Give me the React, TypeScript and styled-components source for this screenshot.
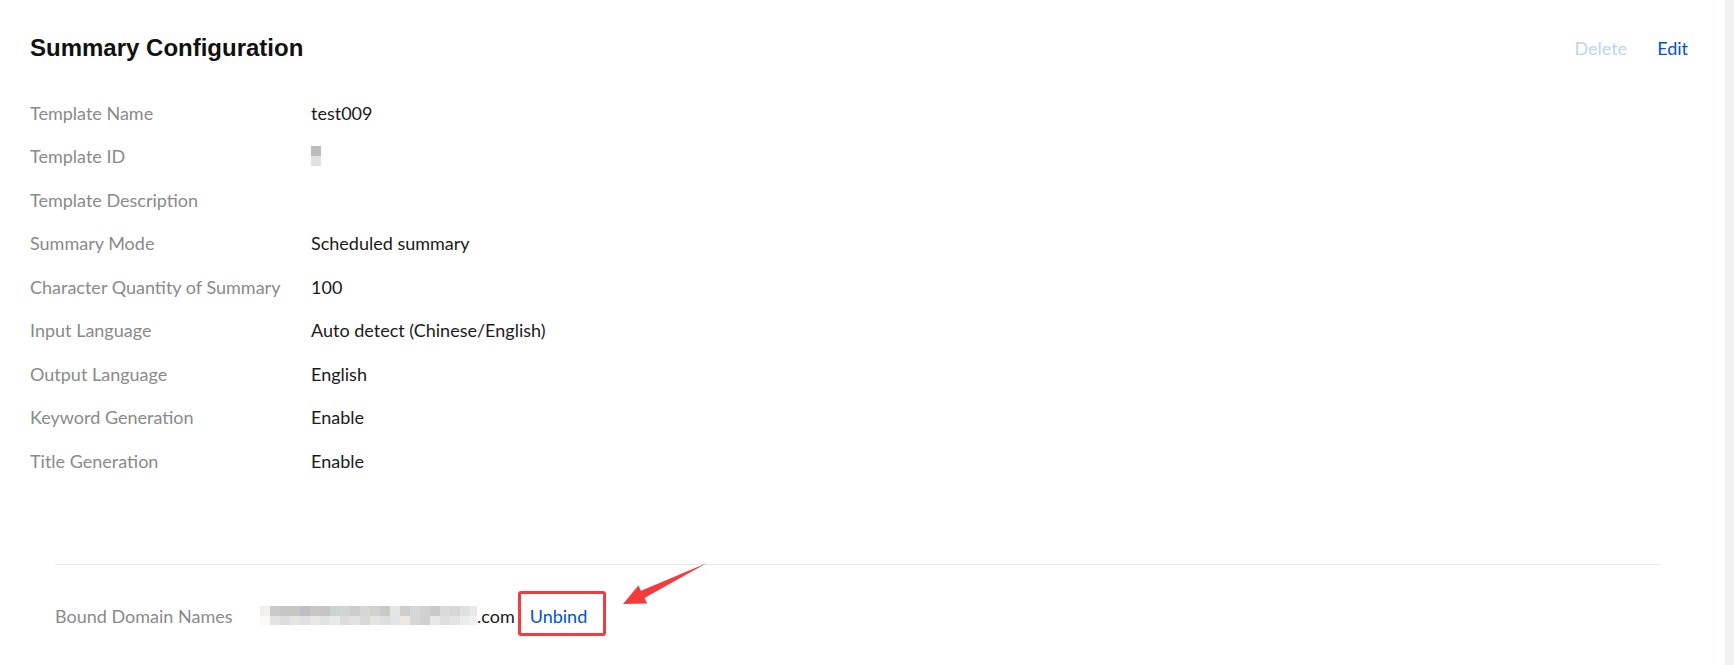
import React from "react";
import styled, { createGlobalStyle } from "styled-components";

const GlobalStyle = createGlobalStyle`
  html, body {
    margin: 0;
    padding: 0;
    background: #f0f2f5;
  }
  body {
    font-family: Lato, "Noto Sans", sans-serif;
  }
`;

interface Field {
  label: string;
  value?: string;
  masked?: boolean;
}

const fields: Field[] = [
  { label: "Template Name", value: "test009" },
  { label: "Template ID", masked: true },
  { label: "Template Description" },
  { label: "Summary Mode", value: "Scheduled summary" },
  { label: "Character Quantity of Summary", value: "100" },
  { label: "Input Language", value: "Auto detect (Chinese/English)" },
  { label: "Output Language", value: "English" },
  { label: "Keyword Generation", value: "Enable" },
  { label: "Title Generation", value: "Enable" },
];

const topMosaic = [
  "#f1efea", "#cacacd", "#c6c6c6", "#c8c5c2", "#bebec4", "#c9c7c5", "#c5c5c5", "#cdd3d1",
  "#d3d3d3", "#cccccc", "#d6d6d6", "#d1d1cf", "#c9c9c5", "#e5e5e9", "#cdcdcd", "#d7d7d9",
  "#d1d1d1", "#c9c9c9", "#dadada", "#d6d6d6", "#e0e0e0", "#e9e9e9",
];
const bottomMosaic = [
  "#fbfaf6", "#e3e3e3", "#dddddd", "#e4e4e4", "#dfdfe1", "#e6e6e6", "#e2e2e2", "#e8e8e6",
  "#dcdcdc", "#e1e1e1", "#d9d9d9", "#e5e5e5", "#dedee0", "#e2e4e6", "#ece9e4", "#d6d6d6",
  "#cfcfcf", "#e6e6e6", "#dedede", "#e4e4e4", "#ececec", "#f1f1f1",
];

export default function App() {
  return (
    <>
      <GlobalStyle />
      <Card>
        <Header>
          <Title>Summary Configuration</Title>
          <Actions>
            <LinkButton disabled>Delete</LinkButton>
            <LinkButton>Edit</LinkButton>
          </Actions>
        </Header>
        <FieldList>
          {fields.map((f) => (
            <FieldRow key={f.label}>
              <Label>{f.label}</Label>
              <Value>
                {f.masked ? (
                  <IdMask>
                    <svg width="10" height="20" viewBox="0 0 10 20">
                      <rect x="0" y="0" width="10" height="10" fill="#bcbcbc" />
                      <rect x="0" y="10" width="10" height="10" fill="#e1e1e1" />
                    </svg>
                  </IdMask>
                ) : (
                  f.value
                )}
              </Value>
            </FieldRow>
          ))}
        </FieldList>
        <BoundSection>
          <BoundRow>
            <BoundLabel>Bound Domain Names</BoundLabel>
            <Domain>
              <svg width="217" height="19" viewBox="0 0 217 19">
                {topMosaic.map((c, i) => (
                  <rect key={"t" + i} x={i * 10} y="0" width="10" height="10" fill={c} />
                ))}
                {bottomMosaic.map((c, i) => (
                  <rect key={"b" + i} x={i * 10} y="10" width="10" height="9" fill={c} />
                ))}
              </svg>
              <DomainSuffix>.com</DomainSuffix>
            </Domain>
            <UnbindWrap>
              <LinkButton>Unbind</LinkButton>
              <Highlight />
              <Arrow width="100" height="60" viewBox="0 0 100 60">
                <polygon
                  points="7,49 22.4,30.4 25,35.8 91,8 28.5,43 31.2,48.4"
                  fill="#f43c3d"
                />
              </Arrow>
            </UnbindWrap>
          </BoundRow>
        </BoundSection>
      </Card>
    </>
  );
}

const Card = styled.div`
  box-sizing: border-box;
  width: 1725px;
  height: 665px;
  background: #fff;
  padding: 24px 37px 0 30px;
`;

const Header = styled.div`
  display: flex;
  align-items: center;
  justify-content: space-between;
  height: 48px;
`;

const Title = styled.h2`
  margin: 0;
  font-family: "Liberation Sans", Arial, sans-serif;
  font-size: 24px;
  font-weight: 700;
  color: #111;
`;

const Actions = styled.div`
  display: flex;
  align-items: center;
  gap: 30px;
`;

const LinkButton = styled.span<{ disabled?: boolean }>`
  font-family: Lato, "Noto Sans", sans-serif;
  font-size: 18px;
  line-height: 24px;
  color: ${(p) => (p.disabled ? "#bbd3fb" : "#0052d9")};
  cursor: ${(p) => (p.disabled ? "not-allowed" : "pointer")};
`;

const FieldList = styled.div`
  margin-top: 19px;
  display: flex;
  flex-direction: column;
`;

const FieldRow = styled.div`
  display: flex;
  align-items: center;
  height: 43.5px;
  font-size: 18px;
  line-height: 24px;
`;

const Label = styled.div`
  width: 281px;
  flex-shrink: 0;
  color: #8a8a8a;
`;

const Value = styled.div`
  color: #1a1a1a;
`;

const IdMask = styled.div`
  display: flex;
  align-items: center;
  height: 24px;
`;

const BoundSection = styled.div`
  margin: 81px 27px 0 25px;
  border-top: 1px solid #e7e7ee;
`;

const BoundRow = styled.div`
  display: flex;
  align-items: center;
  padding-top: 39px;
  font-size: 18px;
  line-height: 24px;
`;

const BoundLabel = styled.div`
  width: 205px;
  flex-shrink: 0;
  color: #8a8a8a;
`;

const Domain = styled.div`
  display: flex;
  align-items: center;
  color: #1a1a1a;
`;

const DomainSuffix = styled.span`
  margin-left: 0;
`;

const UnbindWrap = styled.div`
  position: relative;
  margin-left: 15px;
  display: flex;
  align-items: center;
`;

const Highlight = styled.div`
  position: absolute;
  left: -12px;
  right: -19px;
  top: -13px;
  bottom: -8px;
  border: 3px solid #f43c3d;
  border-radius: 3px;
  pointer-events: none;
`;

const Arrow = styled.svg`
  position: absolute;
  left: 86px;
  top: -49px;
  pointer-events: none;
`;
